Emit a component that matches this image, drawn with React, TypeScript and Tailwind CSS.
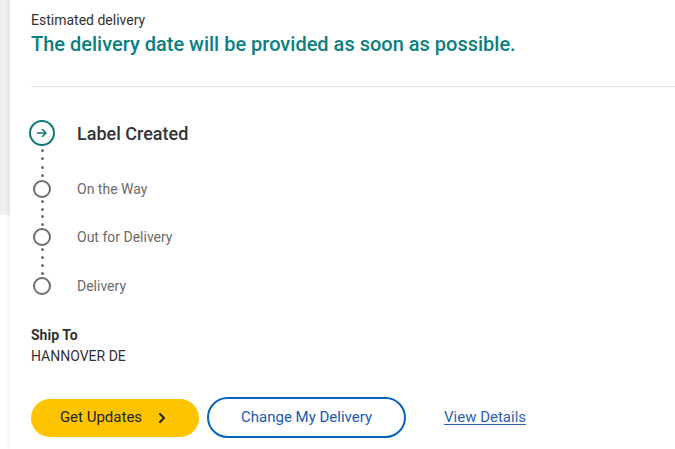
import { ChevronRight } from 'lucide-react';

const steps = [
  { label: 'On the Way', gapAbove: 34 },
  { label: 'Out for Delivery', gapAbove: 30 },
  { label: 'Delivery', gapAbove: 31 },
];

function Dots({ height, count }: { height: number; count: number }) {
  return (
    <div className="flex w-[22px] flex-col items-center justify-around" style={{ height }}>
      {Array.from({ length: count }).map((_, i) => (
        <span key={i} className="block h-[3px] w-[3px] rounded-full bg-[#707070]" />
      ))}
    </div>
  );
}

export default function App() {
  return (
    <div className="flex h-[449px] w-[675px] overflow-hidden bg-white font-['Roboto',sans-serif] text-[#333]">
      {/* gray page edge */}
      <div className="h-[215px] w-[10px] shrink-0 bg-[#efefef]" />

      <div className="flex-1 pl-[21px] shadow-[-2px_0_3px_rgba(0,0,0,0.05)]">
        {/* Estimated delivery */}
        <div className="pt-[10px] text-[14px] leading-[20px] text-[#333]">Estimated delivery</div>
        <h1 className="mt-[1px] text-[20px] font-medium leading-[26px] text-[#0a8080]">
          The delivery date will be provided as soon as possible.
        </h1>
        <div className="mt-[29px] h-px bg-[#e3e3e3]" />

        {/* Timeline */}
        <div className="mt-[33px]">
          <div className="flex h-[26px] items-center">
            <div className="flex w-[22px] justify-center">
              <span className="flex h-[26px] w-[26px] shrink-0 items-center justify-center rounded-full border-2 border-[#137878]">
                <svg width="12" height="10" viewBox="0 0 12 10" fill="none" stroke="#137878" strokeWidth="1.6" strokeLinecap="round" strokeLinejoin="round">
                  <path d="M1.5 5h8.5M6.5 1.5 10 5 6.5 8.5" />
                </svg>
              </span>
            </div>
            <span className="ml-[24px] text-[18px] font-medium text-[#333]">Label Created</span>
          </div>

          {steps.map((s) => (
            <div key={s.label}>
              <Dots height={s.gapAbove} count={4} />
              <div className="flex h-[18px] items-center">
                <div className="flex w-[22px] justify-center">
                  <span className="h-[18px] w-[18px] shrink-0 rounded-full border-2 border-[#6e6e6e]" />
                </div>
                <span className="ml-[24px] text-[14px] text-[#6b6b6b]">{s.label}</span>
              </div>
            </div>
          ))}
        </div>

        {/* Ship to */}
        <div className="mt-[31px] text-[14px] font-bold leading-[18px] text-[#333]">Ship To</div>
        <div className="mt-[3px] text-[14px] leading-[18px] text-[#333]">HANNOVER DE</div>

        {/* Actions */}
        <div className="mt-[32px] flex items-center">
          <button className="flex h-[38px] w-[168px] items-center justify-center gap-[12px] rounded-full bg-[#ffc400] text-[15px] text-[#242424]">
            Get Updates
            <ChevronRight size={16} strokeWidth={3} />
          </button>
          <button className="ml-[8px] h-[41px] w-[199px] rounded-full border-2 border-[#0862bb] text-[15px] text-[#1a5ab0]">
            Change My Delivery
          </button>
          <a href="#" className="ml-[38px] text-[15px] text-[#2f5fb5] underline underline-offset-2">
            View Details
          </a>
        </div>
      </div>
    </div>
  );
}
